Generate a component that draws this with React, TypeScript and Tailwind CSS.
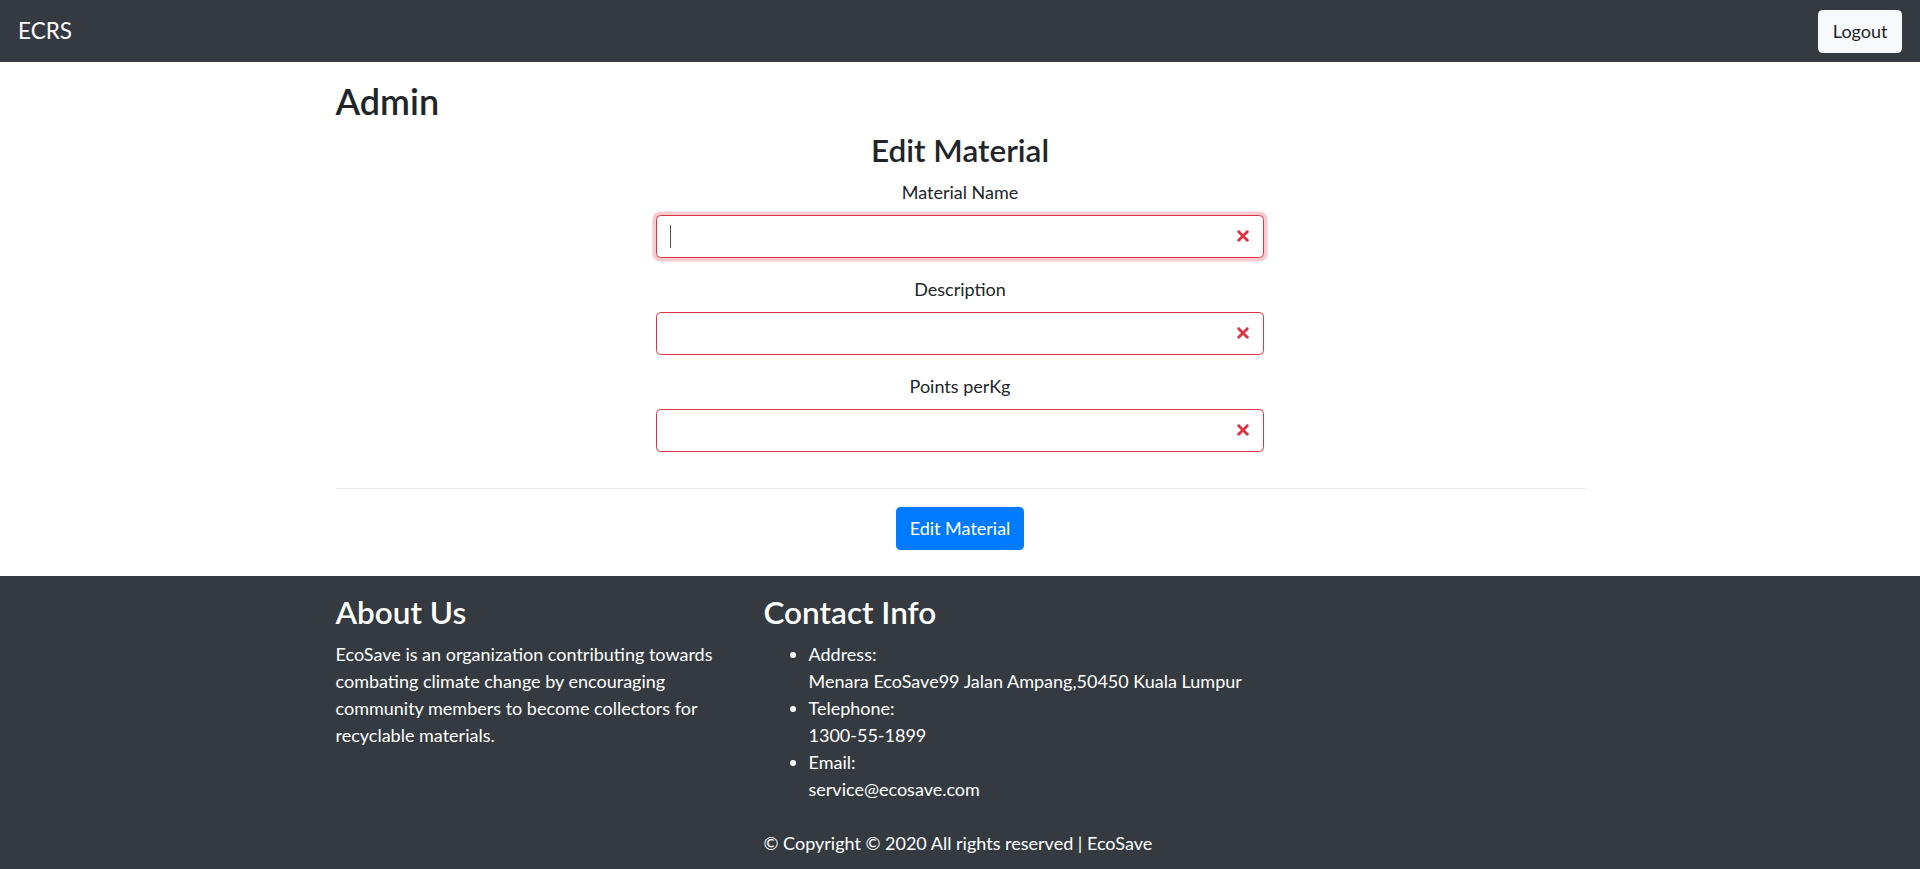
import React from "react";

const font = { fontFamily: "Lato, 'Liberation Sans', sans-serif" };

function InvalidIcon() {
  return (
    <svg
      className="absolute right-[11px] top-1/2 h-[20px] w-[20px] -translate-y-1/2"
      viewBox="-2 -2 7 7"
      fill="#dc3545"
    >
      <path stroke="#dc3545" d="M0 0l3 3m0-3L0 3" />
      <circle r=".5" />
      <circle cx="3" r=".5" />
      <circle cy="3" r=".5" />
      <circle cx="3" cy="3" r=".5" />
    </svg>
  );
}

function Field({ label, focused }: { label: string; focused?: boolean }) {
  return (
    <div className="mb-[18px] flex flex-col items-center">
      <label className="mb-[9px] text-[18px] leading-[27px] text-[#212529]">{label}</label>
      <div className="relative w-[608px]">
        <input
          type="text"
          className={
            "h-[43px] w-full rounded-[4.5px] border border-[#dc3545] bg-white pl-[13.5px] pr-[40px] text-[18px] text-[#495057] outline-none " +
            (focused ? "shadow-[0_0_0_3.6px_rgba(220,53,69,0.25)]" : "")
          }
        />
        {focused && <span className="absolute left-[14px] top-[10px] h-[23px] w-px bg-[#495057]" />}
        <InvalidIcon />
      </div>
    </div>
  );
}

export default function App() {
  return (
    <div className="flex min-h-screen flex-col bg-white" style={font}>
      {/*Navbar*/}
      <nav className="flex h-[62px] items-center justify-between bg-[#343a40] px-[18px]">
        <span className="text-[22.5px] leading-[34px] text-white">ECRS</span>
        <button className="h-[43px] rounded-[4.5px] border border-[#f8f9fa] bg-[#f8f9fa] px-[13.5px] text-[18px] text-[#212529]">
          Logout
        </button>
      </nav>

      {/*Main*/}
      <main className="mx-auto w-[1249px]">
        <h2 className="mt-[18px] mb-[9px] text-[36px] leading-[1.2] font-semibold text-[#212529]">Admin</h2>
        <h3 className="mb-[9px] text-center text-[31.5px] leading-[1.2] font-semibold text-[#212529]">
          Edit Material
        </h3>
        <form>
          <Field label="Material Name" focused />
          <Field label="Description" />
          <Field label="Points perKg" />
          <hr className="mt-[36px] mb-[18px] border-t border-[rgba(0,0,0,0.1)]" />
          <div className="mb-[26px] flex justify-center">
            <button
              type="button"
              className="h-[43px] rounded-[4.5px] bg-[#007bff] px-[13.5px] text-[18px] text-white"
            >
              Edit Material
            </button>
          </div>
        </form>
      </main>

      {/*Footer*/}
      <footer className="flex-1 bg-[#343a40] pt-[18px] pb-[10px] text-white">
        <div className="mx-auto w-[1249px]">
          <div className="flex gap-[34px]">
            <div className="w-[394px]">
              <h3 className="mb-[9px] text-[31.5px] leading-[1.2] font-semibold">About Us</h3>
              <p className="text-[18px] leading-[27px]">
                EcoSave is an organization contributing towards combating climate change by encouraging
                community members to become collectors for recyclable materials.
              </p>
            </div>
            <div className="flex-1">
              <h3 className="mb-[9px] text-[31.5px] leading-[1.2] font-semibold">Contact Info</h3>
              <ul className="list-disc pl-[45px] text-[18px] leading-[27px]">
                <li>
                  Address:
                  <br />
                  Menara EcoSave99 Jalan Ampang,50450 Kuala Lumpur
                </li>
                <li>
                  Telephone:
                  <br />
                  1300-55-1899
                </li>
                <li>
                  Email:
                  <br />
                  service@ecosave.com
                </li>
              </ul>
              <p className="mt-[27px] text-[18px] leading-[27px]">
                © Copyright © 2020 All rights reserved | EcoSave
              </p>
            </div>
          </div>
        </div>
      </footer>
    </div>
  );
}
